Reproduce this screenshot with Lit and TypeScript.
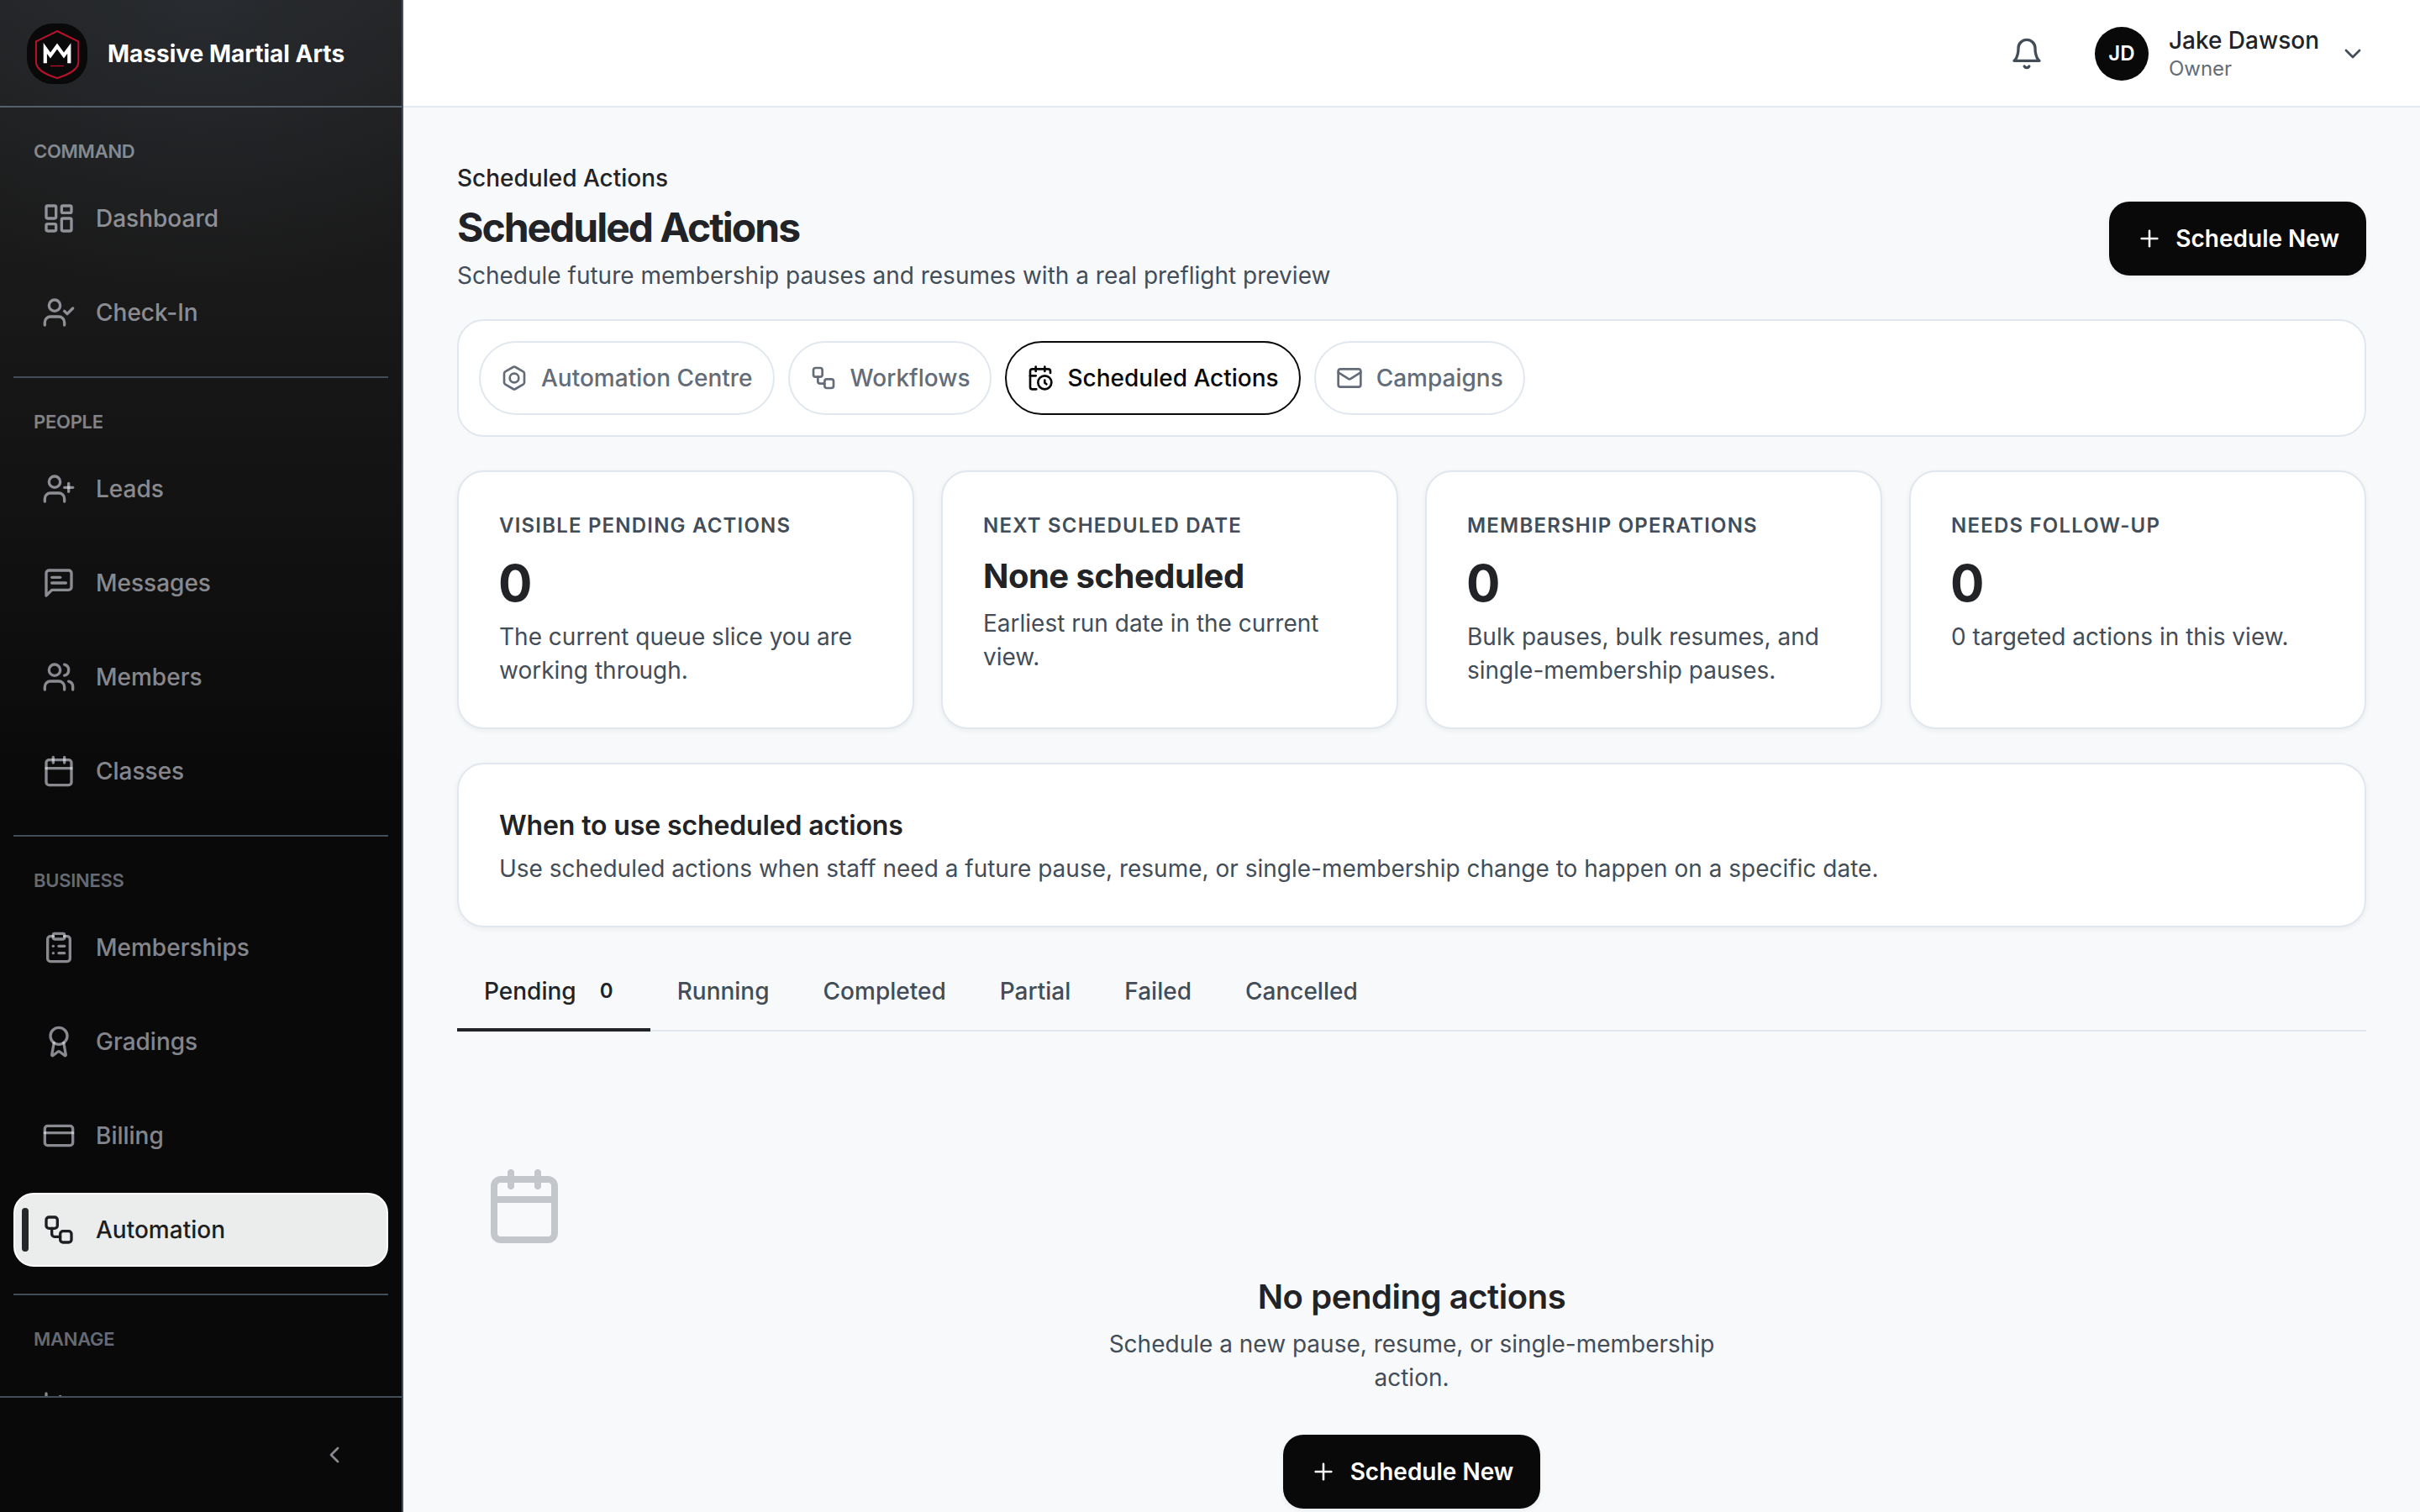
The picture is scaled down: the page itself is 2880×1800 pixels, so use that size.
import { LitElement, html, css, svg, nothing, type TemplateResult } from "lit";
import { customElement, property } from "lit/decorators.js";
import { classMap } from "lit/directives/class-map.js";

const ICONS: Record<string, TemplateResult> = {
  dashboard: svg`<rect width="7" height="9" x="3" y="3" rx="1"/><rect width="7" height="5" x="14" y="3" rx="1"/><rect width="7" height="9" x="14" y="12" rx="1"/><rect width="7" height="5" x="3" y="16" rx="1"/>`,
  userCheck: svg`<path d="m16 11 2 2 4-4"/><path d="M16 21v-2a4 4 0 0 0-4-4H6a4 4 0 0 0-4 4v2"/><circle cx="9" cy="7" r="4"/>`,
  userPlus: svg`<path d="M16 21v-2a4 4 0 0 0-4-4H6a4 4 0 0 0-4 4v2"/><circle cx="9" cy="7" r="4"/><line x1="19" x2="19" y1="8" y2="14"/><line x1="22" x2="16" y1="11" y2="11"/>`,
  message: svg`<path d="M21 15a2 2 0 0 1-2 2H7l-4 4V5a2 2 0 0 1 2-2h14a2 2 0 0 1 2 2z"/><path d="M13 8H7"/><path d="M17 12H7"/>`,
  users: svg`<path d="M16 21v-2a4 4 0 0 0-4-4H6a4 4 0 0 0-4 4v2"/><circle cx="9" cy="7" r="4"/><path d="M22 21v-2a4 4 0 0 0-3-3.87"/><path d="M16 3.13a4 4 0 0 1 0 7.75"/>`,
  calendar: svg`<path d="M8 2v4"/><path d="M16 2v4"/><rect width="18" height="18" x="3" y="4" rx="2"/><path d="M3 10h18"/>`,
  clipboard: svg`<rect width="8" height="4" x="8" y="2" rx="1" ry="1"/><path d="M16 4h2a2 2 0 0 1 2 2v14a2 2 0 0 1-2 2H6a2 2 0 0 1-2-2V6a2 2 0 0 1 2-2h2"/><path d="M12 11h4"/><path d="M12 16h4"/><path d="M8 11h.01"/><path d="M8 16h.01"/>`,
  award: svg`<path d="m15.477 12.89 1.515 8.526a.5.5 0 0 1-.81.47l-3.58-2.687a1 1 0 0 0-1.197 0l-3.586 2.686a.5.5 0 0 1-.81-.469l1.514-8.526"/><circle cx="12" cy="8" r="6"/>`,
  card: svg`<rect width="20" height="14" x="2" y="5" rx="2"/><line x1="2" x2="22" y1="10" y2="10"/>`,
  workflow: svg`<rect width="8" height="8" x="3" y="3" rx="2"/><path d="M7 11v4a2 2 0 0 0 2 2h4"/><rect width="8" height="8" x="13" y="13" rx="2"/>`,
  chart: svg`<path d="M3 3v16a2 2 0 0 0 2 2h16"/><path d="M18 17V9"/><path d="M13 17V5"/><path d="M8 17v-3"/>`,
  chevronLeft: svg`<path d="m15 18-6-6 6-6"/>`,
  chevronDown: svg`<path d="m6 9 6 6 6-6"/>`,
  bell: svg`<path d="M6 8a6 6 0 0 1 12 0c0 7 3 9 3 9H3s3-2 3-9"/><path d="M10.3 21a1.94 1.94 0 0 0 3.4 0"/>`,
  plus: svg`<path d="M5 12h14"/><path d="M12 5v14"/>`,
  bolt: svg`<path d="M21 16V8a2 2 0 0 0-1-1.73l-7-4a2 2 0 0 0-2 0l-7 4A2 2 0 0 0 3 8v8a2 2 0 0 0 1 1.73l7 4a2 2 0 0 0 2 0l7-4A2 2 0 0 0 21 16z"/><circle cx="12" cy="12" r="4"/>`,
  calendarClock: svg`<path d="M21 7.5V6a2 2 0 0 0-2-2H5a2 2 0 0 0-2 2v14a2 2 0 0 0 2 2h3.5"/><path d="M16 2v4"/><path d="M8 2v4"/><path d="M3 10h5"/><path d="M17.5 17.5 16 16.3V14"/><circle cx="16" cy="16" r="6"/>`,
  mail: svg`<rect width="20" height="16" x="2" y="4" rx="2"/><path d="m22 7-8.97 5.7a1.94 1.94 0 0 1-2.06 0L2 7"/>`,
};

@customElement("ui-icon")
class UiIcon extends LitElement {
  static styles = css`
    :host { display: block; flex: none; width: var(--icon-size, 32px); height: var(--icon-size, 32px); }
    svg { display: block; width: 100%; height: 100%; fill: none; stroke: currentColor; stroke-width: var(--icon-stroke, 2); stroke-linecap: round; stroke-linejoin: round; }
  `;
  @property() name = "";
  render() {
    return html`<svg viewBox="0 0 24 24">${ICONS[this.name]}</svg>`;
  }
}

interface NavItem { icon: string; label?: string; active?: boolean }
const NAV: { title: string; items: NavItem[] }[] = [
  { title: "COMMAND", items: [{ icon: "dashboard", label: "Dashboard" }, { icon: "userCheck", label: "Check-In" }] },
  { title: "PEOPLE", items: [
    { icon: "userPlus", label: "Leads" }, { icon: "message", label: "Messages" },
    { icon: "users", label: "Members" }, { icon: "calendar", label: "Classes" } ] },
  { title: "BUSINESS", items: [
    { icon: "clipboard", label: "Memberships" }, { icon: "award", label: "Gradings" },
    { icon: "card", label: "Billing" }, { icon: "workflow", label: "Automation", active: true } ] },
  { title: "MANAGE", items: [{ icon: "chart" }] },
];

@customElement("side-nav")
class SideNav extends LitElement {
  static styles = css`
    :host {
      display: flex; flex-direction: column; box-sizing: border-box; width: 480px; height: 1800px;
      border-right: 2px solid #454e59; color: rgba(240, 244, 255, 0.55);
      background:
        radial-gradient(ellipse 400px 360px at 240px 0, rgba(58, 66, 80, 0.26), rgba(58, 66, 80, 0)),
        linear-gradient(180deg, #222324 0, #1a1a1a 300px, #121212 620px, #090909 960px, #090909 100%);
    }
    .brand { display: flex; align-items: center; gap: 24px; box-sizing: border-box; flex: none; height: 128px; padding: 2px 32px 0; border-bottom: 2px solid #56606c; }
    .logo { width: 72px; height: 72px; flex: none; }
    .name { font-size: 28px; font-weight: 700; line-height: 40px; color: #fff; white-space: nowrap; }
    .scroll { flex: 1; min-height: 0; overflow: hidden; padding: 0 16px; }
    .section { padding: 36px 0 32px; border-bottom: 2px solid #434c57; }
    .title { padding: 0 24px; font-size: 22px; font-weight: 600; letter-spacing: -0.012em; line-height: 32px; margin-bottom: 20px; color: rgba(236, 242, 255, 0.5); }
    .section.low .title { color: rgba(220, 232, 255, 0.44); }
    .items { display: flex; flex-direction: column; gap: 24px; }
    .item {
      display: flex; align-items: center; gap: 24px; box-sizing: border-box; position: relative;
      height: 88px; padding: 0 32px; border: 2px solid transparent; border-radius: 24px;
      font-size: 28px; font-weight: 500; --icon-size: 40px;
    }
    .item.active { background: #ebedec; border-color: #fff; color: #1c1e22; }
    .mark { position: absolute; left: 8px; top: 16px; width: 8px; height: 52px; border-radius: 4px; background: #25272b; }
    .foot { display: flex; align-items: center; justify-content: flex-end; box-sizing: border-box; flex: none; height: 138px; padding-right: 64px; border-top: 2px solid #434c57; }
  `;
  render() {
    return html`
      <div class="brand">
        <svg class="logo" viewBox="0 0 72 72">
          <rect width="72" height="72" rx="31" fill="#090909"/>
          <path d="M36 9 61.300 21.400V46c0 8.500-10 14-25.300 19C20.700 60 10.900 54.500 10.900 46V21.400Z" fill="none" stroke="#b8122c" stroke-width="2"/>
          <path d="M21.800 47.300V29.500L28 38 36 27 44 38 50.300 29.500V47.300" fill="none" stroke="#fff" stroke-width="4.200" stroke-miterlimit="10"/>
          <path d="M28 50.500H44" stroke="#b8122c" stroke-width="1.300"/>
        </svg>
        <span class="name">Massive Martial Arts</span>
      </div>
      <div class="scroll">
        ${NAV.map((s, i) => html`
          <div class=${classMap({ section: true, low: i > 1 })}>
            <div class="title">${s.title}</div>
            <div class="items">
              ${s.items.map((it) => html`
                <div class=${classMap({ item: true, active: !!it.active })}>
                  ${it.active ? html`<span class="mark"></span>` : nothing}
                  <ui-icon name=${it.icon}></ui-icon>${it.label ? html`<span>${it.label}</span>` : nothing}
                </div>`)}
            </div>
          </div>`)}
      </div>
      <div class="foot"><ui-icon name="chevronLeft"></ui-icon></div>
    `;
  }
}

@customElement("primary-button")
class PrimaryButton extends LitElement {
  static styles = css`
    :host { display: inline-flex; align-items: center; gap: 16px; box-sizing: border-box; height: 88px; padding: 0 32px; border-radius: 24px; background: #090909; color: #fff; font-size: 28px; font-weight: 600; white-space: nowrap; flex: none; box-shadow: 0 2px 6px rgba(10, 10, 10, 0.06); --icon-stroke: 1.9; }
  `;
  render() {
    return html`<ui-icon name="plus"></ui-icon><span><slot></slot></span>`;
  }
}

@customElement("app-root")
class AppRoot extends LitElement {
  static styles = css`
    :host { display: flex; width: 2880px; height: 1800px; overflow: hidden; background: #f8f9fb; font-family: Inter, "Liberation Sans", sans-serif; font-size: 28px; line-height: 40px; color: #212327; }
    .main { flex: 1; min-width: 0; }
    .top { display: flex; align-items: center; justify-content: flex-end; box-sizing: border-box; height: 128px; padding: 2px 64px 0 0; background: #fff; border-bottom: 2px solid #e4e8f1; color: #434d58; }
    .bell { --icon-size: 40px; margin-right: 61px; }
    .avatar { display: flex; align-items: center; justify-content: center; width: 64px; height: 64px; margin-right: 24px; border-radius: 50%; background: #090909; color: #fff; font-size: 24px; font-weight: 600; }
    .who { margin-right: 24px; }
    .person { line-height: 35px; font-weight: 500; color: #212327; }
    .role { font-size: 24px; line-height: 32px; color: #636c78; }
    .content { padding: 64px; }
    .head { display: flex; justify-content: space-between; align-items: flex-end; height: 156px; margin-bottom: 32px; }
    .head primary-button { margin-bottom: 20px; gap: 15px; }
    .crumb { font-weight: 500; }
    h1 { margin: 9px 0 7px; font-size: 48px; line-height: 60px; font-weight: 700; letter-spacing: -0.042em; }
    .muted { color: #434d58; }
    .pills { display: flex; gap: 16px; padding: 24px; border: 2px solid #e1e7ee; border-radius: 32px; background: #fff; }
    .pill { display: flex; align-items: center; gap: 16px; box-sizing: border-box; height: 88px; padding: 0 24px; border: 2px solid #e1e7ee; border-radius: 44px; font-weight: 500; color: #636c78; }
    .pill.on { border-color: #090909; color: #090909; }
    .cards { display: grid; grid-template-columns: repeat(4, 1fr); gap: 32px; margin: 40px 0; }
    .card { box-sizing: border-box; padding: 48px; border: 2px solid #e1e7ee; border-radius: 32px; background: #fff; box-shadow: 0 2px 6px rgba(20, 30, 50, 0.06); }
    .label { margin-bottom: 16px; font-size: 24px; line-height: 32px; font-weight: 600; letter-spacing: 0.05em; color: #434d58; }
    .value { margin: 0 0 8px -1px; font-size: 60px; line-height: 72px; font-weight: 700; }
    .value.text { margin-left: 0; font-size: 40px; line-height: 56px; letter-spacing: -0.013em; }
    .info { margin-bottom: 6px; font-size: 32px; line-height: 50px; font-weight: 600; letter-spacing: -0.004em; }
    .tabs { display: flex; margin-top: 32px; box-shadow: inset 0 -2px 0 #e1e7ee; }
    .tab { display: flex; align-items: center; gap: 16px; padding: 24px 32px; border-bottom: 4px solid transparent; font-weight: 500; color: #434d58; }
    .tab.on { color: #212327; border-color: #212327; }
    .count { width: 40px; text-align: center; font-size: 24px; font-weight: 600; }
    .empty { display: flex; flex-direction: column; align-items: center; padding: 160px 32px 0; }
    .art { align-self: flex-start; --icon-size: 96px; color: #636c78; opacity: 0.35; }
    h2 { margin: 32px 0 8px; font-size: 40px; line-height: 56px; font-weight: 600; letter-spacing: -0.011em; }
    .note { width: 768px; margin-bottom: 48px; text-align: center; }
  `;
  private pills = [
    ["bolt", "Automation Centre"], ["workflow", "Workflows"],
    ["calendarClock", "Scheduled Actions"], ["mail", "Campaigns"],
  ];
  private stats = [
    ["VISIBLE PENDING ACTIONS", "0", "The current queue slice you are working through."],
    ["NEXT SCHEDULED DATE", "None scheduled", "Earliest run date in the current view."],
    ["MEMBERSHIP OPERATIONS", "0", "Bulk pauses, bulk resumes, and single-membership pauses."],
    ["NEEDS FOLLOW-UP", "0", "0 targeted actions in this view."],
  ];
  private tabs = ["Pending", "Running", "Completed", "Partial", "Failed", "Cancelled"];

  render() {
    return html`
      <side-nav></side-nav>
      <div class="main">
        <div class="top">
          <ui-icon class="bell" name="bell"></ui-icon>
          <div class="avatar">JD</div>
          <div class="who"><div class="person">Jake Dawson</div><div class="role">Owner</div></div>
          <ui-icon name="chevronDown"></ui-icon>
        </div>
        <div class="content">
          <div class="head">
            <div>
              <div class="crumb">Scheduled Actions</div>
              <h1>Scheduled Actions</h1>
              <div class="muted">Schedule future membership pauses and resumes with a real preflight preview</div>
            </div>
            <primary-button>Schedule New</primary-button>
          </div>
          <div class="pills">
            ${this.pills.map(([icon, label], i) => html`
              <div class=${classMap({ pill: true, on: i === 2 })}><ui-icon name=${icon}></ui-icon><span>${label}</span></div>`)}
          </div>
          <div class="cards">
            ${this.stats.map(([label, value, text]) => html`
              <div class="card">
                <div class="label">${label}</div>
                <div class=${classMap({ value: true, text: value.length > 1 })}>${value}</div>
                <div class="muted">${text}</div>
              </div>`)}
          </div>
          <div class="card">
            <div class="info">When to use scheduled actions</div>
            <div class="muted">Use scheduled actions when staff need a future pause, resume, or single-membership change to happen on a specific date.</div>
          </div>
          <div class="tabs">
            ${this.tabs.map((t, i) => html`
              <div class=${classMap({ tab: true, on: i === 0 })}><span>${t}</span>${i === 0 ? html`<span class="count">0</span>` : nothing}</div>`)}
          </div>
          <div class="empty">
            <ui-icon class="art" name="calendar"></ui-icon>
            <h2>No pending actions</h2>
            <div class="muted note">Schedule a new pause, resume, or single-membership action.</div>
            <primary-button>Schedule New</primary-button>
          </div>
        </div>
      </div>
    `;
  }
}
